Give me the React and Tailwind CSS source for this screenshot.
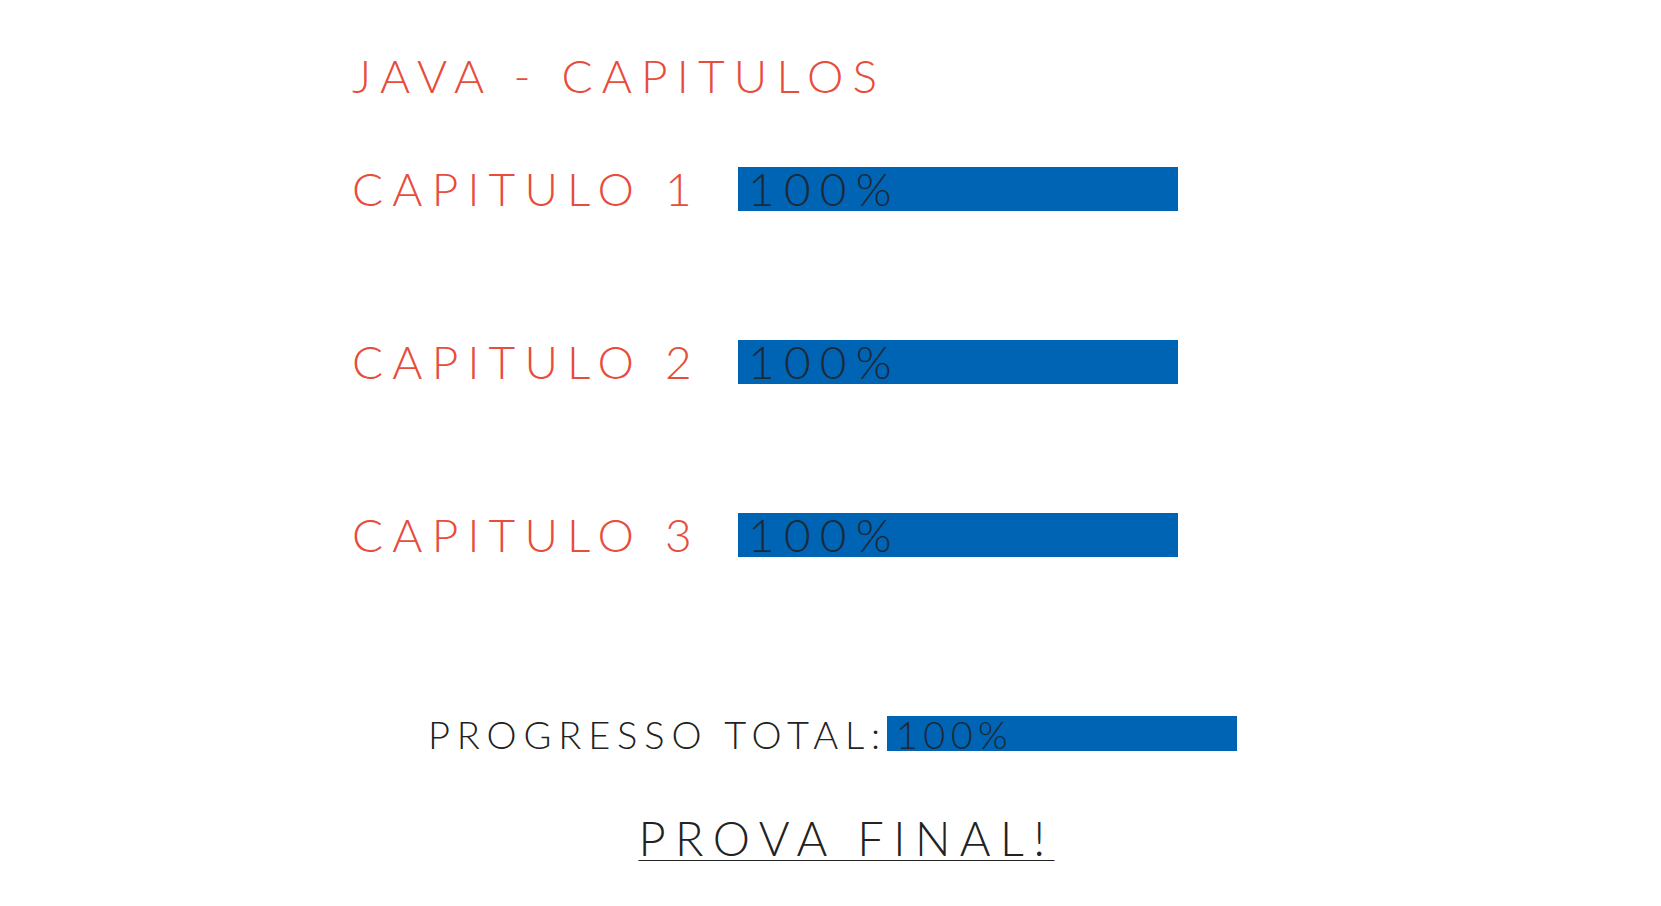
import React from 'react';

const CHAPTERS = [
  { name: 'Capitulo 1', progress: 100 },
  { name: 'Capitulo 2', progress: 100 },
  { name: 'Capitulo 3', progress: 100 },
];

function ProgressBar({ value, className, textClass }) {
  return (
    <div className={`bg-[#0064b4] flex items-center ${className}`}>
      <span className={`text-[#1c2a38] uppercase leading-none ${textClass}`}>{value}%</span>
    </div>
  );
}

export default function App() {
  const total = Math.round(CHAPTERS.reduce((s, c) => s + c.progress, 0) / CHAPTERS.length);

  return (
    <div className="min-h-screen bg-white font-['Lato','Liberation_Sans',sans-serif] font-light">
      <div className="pl-[352px] pt-[53px]">
        <h1 className="text-[46px] leading-none tracking-[0.2em] uppercase text-[#e74c3c] font-light">
          Java - Capitulos
        </h1>

        <div className="mt-[68px] flex flex-col gap-[129px]">
          {CHAPTERS.map((c) => (
            <div key={c.name} className="flex items-center h-[44px]">
              <span className="w-[386px] text-[46px] leading-none tracking-[0.2em] uppercase text-[#e74c3c]">
                {c.name}
              </span>
              <ProgressBar
                value={c.progress}
                className="w-[440px] h-[44px] pl-[10px]"
                textClass="text-[46px] tracking-[0.2em]"
              />
            </div>
          ))}
        </div>
      </div>

      <div className="mt-[159px] flex flex-col items-center">
        <div className="flex items-center h-[35px] ml-[4px]">
          <span className="text-[38px] leading-none tracking-[0.18em] uppercase text-[#222]">
            Progresso total:
          </span>
          <ProgressBar
            value={total}
            className="w-[350px] h-[35px] pl-[9px]"
            textClass="text-[38px] tracking-[0.14em]"
          />
        </div>

        <a
          href="#"
          className="mt-[64px] ml-[32px] text-[47px] leading-none tracking-[0.2em] uppercase text-[#222] underline underline-offset-[4px] decoration-1"
        >
          Prova final!
        </a>
      </div>
    </div>
  );
}
